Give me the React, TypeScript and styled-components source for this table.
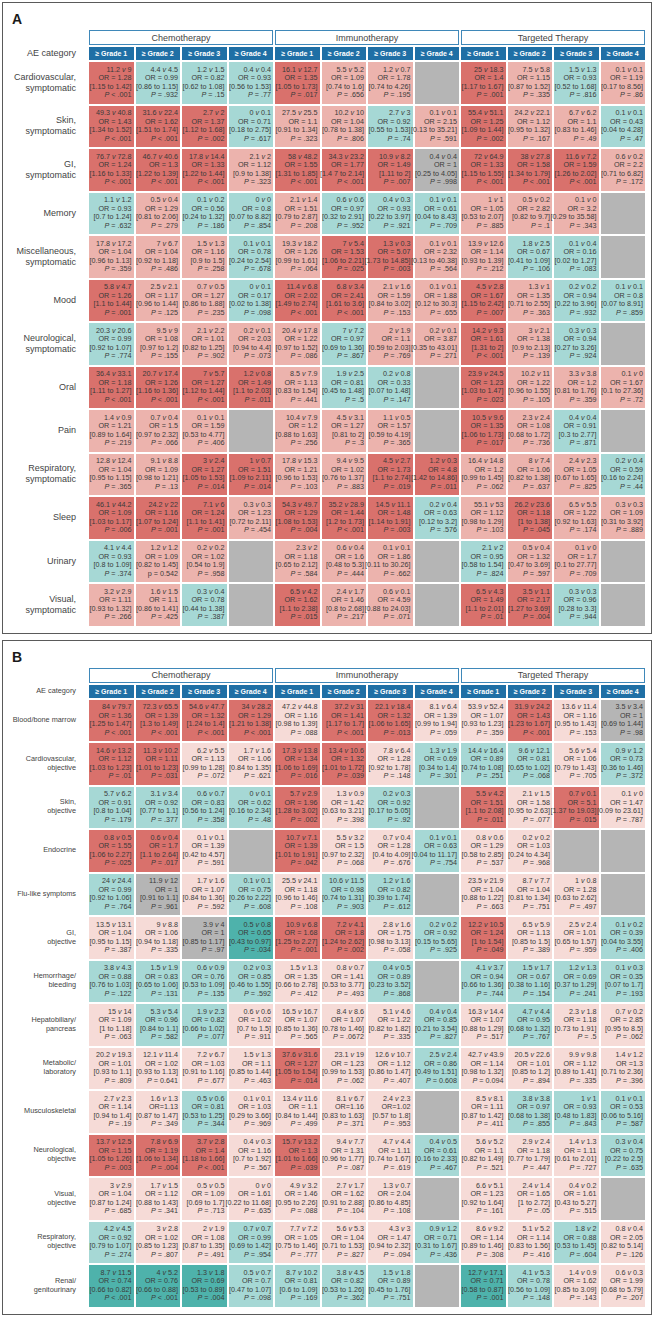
import React from 'react';
import styled, { createGlobalStyle } from 'styled-components';

// cell = "a v b;OR;ci;p"  (null = no data, grey block)
type RowData = { label: string[]; cells: (string | null)[] };

const GROUPS = ['Chemotherapy', 'Immunotherapy', 'Targeted Therapy'];
const GRADES = [1, 2, 3, 4];

const color = {
  red: '#d9716c',
  pinkA: '#ecb3ad',
  pinkB: '#f6dbd7',
  teal: '#a6d8d5',
  tealDark: '#4eb2ab',
  grey: '#b5b5b5',
  blue: '#1f6fa5',
  line: '#3f88b9',
  text: '#3a3a3a',
};

const panelA: RowData[] = [
  { label: ['Cardiovascular,', 'symptomatic'], cells: [
    '11.2 v 9;1.28;1.15 to 1.42;< .001', '4.4 v 4.5;0.99;0.86 to 1.15;= .932', '1.2 v 1.5;0.82;0.62 to 1.08;= .15', '0.4 v 0.4;0.93;0.56 to 1.53;= .77',
    '16.1 v 12.7;1.35;1.05 to 1.73;= .017', '5.5 v 5.2;1.09;0.74 to 1.6;= .656', '1.2 v 0.7;1.78;0.74 to 4.26;= .195', null,
    '25 v 18.3;1.4;1.17 to 1.67;= .001', '7.5 v 5.8;1.15;0.87 to 1.52;= .335', '1.5 v 1.3;0.93;0.52 to 1.68;= .816', '0.1 v 0.1;1.19;0.17 to 8.56;= .86',
  ] },
  { label: ['Skin,', 'symptomatic'], cells: [
    '49.3 v 40.8;1.43;1.34 to 1.52;< .001', '31.6 v 22.4;1.62;1.51 to 1.74;< .001', '2.7 v 2;1.37;1.12 to 1.68;= .002', '0 v 0.1;0.71;0.18 to 2.75;= .617',
    '27.5 v 25.5;1.1;0.91 to 1.34;= .323', '10.2 v 10;1.04;0.78 to 1.38;= .806', '2.7 v 3;0.92;0.55 to 1.53;= .74', '0.1 v 0.1;2.15;0.13 to 35.21;= .591',
    '55.4 v 51.1;1.25;1.09 to 1.44;= .002', '24.2 v 22.1;1.12;0.95 to 1.32;= .167', '6.7 v 6.2;1.1;0.83 to 1.46;= .49', '0.1 v 0.1;0.43;0.04 to 4.28;= .47',
  ] },
  { label: ['GI,', 'symptomatic'], cells: [
    '76.7 v 72.8;1.24;1.16 to 1.33;< .001', '46.7 v 40.6;1.3;1.22 to 1.39;< .001', '17.8 v 14.4;1.33;1.22 to 1.44;< .001', '2.1 v 2;1.12;0.9 to 1.38;= .323',
    '58 v 48.2;1.55;1.31 to 1.85;< .001', '34.3 v 23.2;1.77;1.4 7 to 2.14;< .001', '10.9 v 8.2;1.49;1.11 to 2;= .007', '0.4 v 0.4;1;0.25 to 4.05;= .998',
    '72 v 64.9;1.33;1.15 to 1.55;< .001', '38 v 27.8;1.58;1.34 to 1.79;< .001', '11.6 v 7.2;1.59;1.26 to 2.02;< .001', '0.6 v 0.2;2.2;0.71 to 6.82;= .172',
  ] },
  { label: ['Memory'], cells: [
    '1.1 v 1.2;0.93;0.7 to 1.24;= .632', '0.5 v 0.4;1.29;0.81 to 2.06;= .279', '0.1 v 0.2;0.56;0.24 to 1.32;= .186', '0 v 0;0.8;0.07 to 8.82;= .854',
    '2.1 v 1.4;1.51;0.79 to 2.87;= .208', '0.6 v 0.6;0.97;0.32 to 2.91;= .952', '0.4 v 0.3;0.93;0.22 to 3.97;= .921', '0.1 v 0.1;0.61;0.04 to 8.43;= .709',
    '1 v 1;1.05;0.53 to 2.07;= .885', '0.5 v 0.2;2.82;0.82 to 9.7;= .1', '0.1 v 0;3.2;0.29 to 35.58;= .343', null,
  ] },
  { label: ['Miscellaneous,', 'symptomatic'], cells: [
    '17.8 v 17.2;1.04;0.96 to 1.13;= .359', '7 v 6.7;1.04;0.92 to 1.18;= .486', '1.5 v 1.3;1.16;0.9 to 1.5;= .258', '0.1 v 0.1;0.78;0.24 to 2.54;= .678',
    '19.3 v 18.2;1.26;0.99 to 1.61;= .064', '7 v 5.4;1.53;1.06 to 2.21;= .025', '1.3 v 0.3;5.07;1.73 to 14.85;= .003', '0.1 v 0.1;2.32;0.13 to 40.38;= .564',
    '13.9 v 12.6;1.14;0.93 to 1.39;= .212', '1.8 v 2.5;0.67;0.41 to 1.09;= .106', '0.1 v 0.4;0.16;0.02 to 1.27;= .083', null,
  ] },
  { label: ['Mood'], cells: [
    '5.8 v 4.7;1.26;1.1 to 1.44;= .001', '2.5 v 2.1;1.17;0.96 to 1.44;= .125', '0.7 v 0.5;1.27;0.86 to 1.88;= .235', '0 v 0.1;0.17;0.02 to 1.38;= .098',
    '11.4 v 6.8;2.02;1.49 to 2.74;< .001', '6.8 v 3.4;2.41;1.61 to 3.6;< .001', '2.1 v 1.6;1.59;0.84 to 3.02;= .153', '0.1 v 0.1;1.88;0.12 to 30.3;= .655',
    '4.5 v 2.8;1.67;1.15 to 2.42;= .007', '1.3 v 1;1.35;0.71 to 2.55;= .363', '0.2 v 0.2;0.94;0.22 to 3.96;= .932', '0.1 v 0.1;0.8;0.07 to 8.91;= .859',
  ] },
  { label: ['Neurological,', 'symptomatic'], cells: [
    '20.3 v 20.6;0.99;0.92 to 1.07;= .774', '9.5 v 9;1.08;0.97 to 1.2;= .155', '2.1 v 2.2;1.01;0.82 to 1.25;= .902', '0.2 v 0.1;2.03;0.94 to 4.4;= .073',
    '20.4 v 17.8;1.22;0.97 to 1.52;= .086', '7 v 7.2;0.97;0.69 to 1.36;= .867', '2 v 1.9;1.1;0.59 to 2.03;= .769', '0.2 v 0.1;3.87;0.35 to 43.01;= .271',
    '14.2 v 9.3;1.61;1.31 to 2;< .001', '3 v 2.1;1.38;0.9 to 2.13;= .139', '0.3 v 0.3;0.94;0.27 to 3.26;= .924', null,
  ] },
  { label: ['Oral'], cells: [
    '36.4 v 33.1;1.18;1.11 to 1.27;< .001', '20.7 v 17.4;1.26;1.16 to 1.36;< .001', '7 v 5.7;1.27;1.12 to 1.44;< .001', '1.2 v 0.8;1.49;1.1 to 2.03;= .011',
    '8.5 v 7.9;1.13;0.83 to 1.54;= .441', '1.9 v 2.5;0.81;0.45 to 1.48;= .5', '0.2 v 0.8;0.33;0.07 to 1.48;= .147', null,
    '23.9 v 24.5;1.23;1.03 to 1.47;= .023', '10.2 v 11;1.22;0.96 to 1.55;= .105', '3.3 v 3.8;1.2;0.81 to 1.76;= .359', '0.1 v 0;1.67;0.1 to 27.36;= .72',
  ] },
  { label: ['Pain'], cells: [
    '1.4 v 0.9;1.21;0.89 to 1.64;= .219', '0.7 v 0.4;1.5;0.97 to 2.32;= .066', '0.1 v 0.1;1.59;0.53 to 4.77;= .406', null,
    '10.4 v 7.9;1.2;0.88 to 1.63;= .256', '4.5 v 3.1;1.27;0.81 to 2;= .3', '1.1 v 0.5;1.57;0.59 to 4.19;= .365', null,
    '10.5 v 9.6;1.35;1.06 to 1.73;= .017', '2.3 v 2.4;1.08;0.68 to 1.72;= .736', '0.4 v 0.4;0.91;0.3 to 2.77;= .871', null,
  ] },
  { label: ['Respiratory,', 'symptomatic'], cells: [
    '12.8 v 12.4;1.04;0.95 to 1.15;= .365', '9.1 v 8.8;1.09;0.98 to 1.21;= .13', '3 v 2.4;1.27;1.05 to 1.53;= .014', '1 v 0.7;1.51;1.09 to 2.11;= .014',
    '17.8 v 15.3;1.21;0.96 to 1.53;= .103', '9.4 v 9.5;1.02;0.76 to 1.37;= .883', '4.5 v 2.7;1.73;1.1 to 2.74;= .019', '1.2 v 0.3;4.8;1.42 to 14.86;= .011',
    '16.4 v 14.8;1.2;0.99 to 1.45;= .062', '8 v 7.4;1.06;0.82 to 1.38;= .637', '2.4 v 2.3;1.05;0.67 to 1.65;= .825', '0.2 v 0.4;0.59;0.16 to 2.24;= .44',
  ] },
  { label: ['Sleep'], cells: [
    '46.1 v 44.2;1.09;1.03 to 1.17;= .006', '24.2 v 22;1.16;1.07 to 1.24;= .001', '7.1 v 6;1.24;1.1 to 1.41;= .001', '0.3 v 0.3;1.23;0.72 to 2.11;= .454',
    '54.3 v 49.7;1.29;1.08 to 1.53;= .004', '35.2 v 28.9;1.44;1.2 to 1.73;< .001', '14.5 v 11.1;1.48;1.14 to 1.91;= .003', '0.2 v 0.4;0.63;0.12 to 3.2;= .576',
    '55.1 v 53;1.12;0.98 to 1.29;= .103', '26.2 v 23.6;1.18;1 to 1.38;= .045', '6.5 v 5.5;1.22;0.92 to 1.63;= .174', '0.3 v 0.3;1.09;0.31 to 3.92;= .889',
  ] },
  { label: ['Urinary'], cells: [
    '4.1 v 4.4;0.93;0.8 to 1.09;= .374', '1.2 v 1.2;1.09;0.82 to 1.45;p = 0.542', '0.2 v 0.2;1.02;0.54 to 1.9;= .958', null,
    '2.3 v 2;1.18;0.65 to 2.12;= .584', '0.6 v 0.4;1.6;0.48 to 5.3;= .444', '0.1 v 0.1;1.86;0.11 to 30.26;= .662', null,
    '2.1 v 2;0.95;0.58 to 1.54;= .824', '0.5 v 0.4;1.32;0.47 to 3.69;= .597', '0.1 v 0;1.7;0.1 to 27.77;= .709', null,
  ] },
  { label: ['Visual,', 'symptomatic'], cells: [
    '3.2 v 2.9;1.11;0.93 to 1.32;= .266', '1.6 v 1.5;1.1;0.86 to 1.41;= .425', '0.3 v 0.4;0.78;0.44 to 1.38;= .387', null,
    '6.5 v 4.2;1.62;1.1 to 2.38;= .015', '2.4 v 1.7;1.46;0.8 to 2.68;= .217', '0.6 v 0.1;4.59;0.88 to 24.03;= .071', null,
    '6.5 v 4.3;1.49;1.1 to 2.01;= .01', '3.5 v 1.1;2.17;1.27 to 3.69;= .004', '0.3 v 0.3;0.96;0.28 to 3.3;= .944', null,
  ] },
];

const panelB: RowData[] = [
  { label: ['Blood/bone marrow'], cells: [
    '84 v 79.7;1.36;1.25 to 1.47;< .001', '72.3 v 65.5;1.39;1.3 to 1.49;< .001', '54.6 v 47.7;1.32;1.24 to 1.4;< .001', '34 v 28.2;1.29;1.21 to 1.38;< .001',
    '47.2 v 44.8;1.16;0.98 to 1.39;= .088', '37.2 v 31;1.41;1.17 to 1.7;< .001', '22.1 v 18.4;1.32;1.06 to 1.65;= .013', '8.1 v 6.4;1.39;0.99 to 1.94;= .059',
    '53.9 v 52.4;1.07;0.93 to 1.23;= .359', '31.9 v 24.2;1.43;1.23 to 1.67;< .001', '13.6 v 11.4;1.16;0.95 to 1.43;= .153', '3.5 v 3.4;1;0.69 to 1.44;= .98',
  ] },
  { label: ['Cardiovascular,', 'objective'], cells: [
    '14.6 v 13.2;1.12;1.03 to 1.23;= .01', '11.3 v 10.2;1.11;1.01 to 1.23;= .031', '6.2 v 5.5;1.13;0.99 to 1.28;= .072', '1.7 v 1.6;1.06;0.84 to 1.35;= .621',
    '17.3 v 13.8;1.34;1.06 to 1.69;= .016', '13.4 v 10.6;1.32;1.01 to 1.72;= .039', '7.8 v 6.4;1.28;0.92 to 1.78;= .148', '1.3 v 1.9;0.69;0.34 to 1.4;= .301',
    '14.4 v 16.4;0.89;0.74 to 1.08;= .251', '9.6 v 12.1;0.81;0.65 to 1.02;= .068', '5.6 v 5.4;1.06;0.79 to 1.43;= .705', '0.9 v 1.2;0.73;0.36 to 1.46;= .372',
  ] },
  { label: ['Skin,', 'objective'], cells: [
    '5.7 v 6.2;0.91;0.8 to 1.04;= .179', '3.1 v 3.4;0.92;0.77 to 1.1;= .377', '0.6 v 0.7;0.83;0.56 to 1.24;= .358', '0 v 0.1;0.62;0.16 to 2.34;= .48',
    '5.7 v 2.9;1.96;1.28 to 3.02;= .002', '1.3 v 0.9;1.42;0.63 to 3.21;= .398', '0.2 v 0.3;0.92;0.17 to 5.05;= .92', null,
    '5.5 v 4.2;1.51;1.1 to 2.08;= .011', '2.1 v 1.5;1.58;0.95 to 2.63;= .077', '0.7 v 0.1;5.1;1.37 to 19.03;= .015', '0.1 v 0;1.47;0.09 to 23.61;= .787',
  ] },
  { label: ['Endocrine'], cells: [
    '0.8 v 0.5;1.55;1.06 to 2.27;= .025', '0.6 v 0.4;1.7;1.1 to 2.64;= .017', '0.1 v 0.1;1.39;0.42 to 4.57;= .591', null,
    '10.7 v 7.1;1.39;1.01 to 1.91;= .042', '5.5 v 3.2;1.5;0.97 to 2.32;= .068', '0.7 v 0.4;1.28;0.4 to 4.09;= .676', '0.1 v 0.1;0.63;0.04 to 11.17;= .754',
    '0.8 v 0.6;1.29;0.58 to 2.85;= .537', '0.2 v 0.2;1.03;0.24 to 4.34;= .968', null, null,
  ] },
  { label: ['Flu-like symptoms'], cells: [
    '24 v 24.4;0.99;0.92 to 1.06;= .764', '11.9 v 12;1;0.91 to 1.1;= .961', '1.7 v 1.6;1.07;0.84 to 1.36;= .592', '0.1 v 0.1;0.75;0.26 to 2.22;= .608',
    '25.5 v 24.1;1.18;0.96 to 1.46;= .108', '10.6 v 11.5;0.98;0.74 to 1.31;= .903', '1.2 v 1.6;0.82;0.39 to 1.74;= .612', null,
    '23.5 v 21.9;1.04;0.88 to 1.22;= .663', '8.7 v 7.7;1.04;0.81 to 1.34;= .751', '1 v 0.8;1.28;0.63 to 2.62;= .497', null,
  ] },
  { label: ['GI,', 'objective'], cells: [
    '13.5 v 13.1;1.04;0.95 to 1.15;= .387', '9 v 8.8;1.06;0.94 to 1.18;= .335', '3.9 v 4;1;0.85 to 1.17;= .97', '0.5 v 0.8;0.65;0.43 to 0.97;= .034',
    '10.9 v 6.8;1.68;1.25 to 2.27;= .001', '7.2 v 4.1;1.8;1.24 to 2.62;= .002', '2.8 v 1.6;1.75;0.98 to 3.13;= .058', '0.2 v 0.2;0.92;0.15 to 5.65;= .925',
    '12.2 v 10.5;1.24;1 to 1.54;= .049', '6.5 v 5.9;1.13;0.85 to 1.5;= .389', '2.5 v 2.4;1.01;0.65 to 1.57;= .959', '0.1 v 0.2;0.39;0.04 to 3.55;= .406',
  ] },
  { label: ['Hemorrhage/', 'bleeding'], cells: [
    '3.8 v 4.3;0.88;0.76 to 1.03;= .122', '1.5 v 1.9;0.83;0.65 to 1.06;= .131', '0.6 v 0.9;0.76;0.53 to 1.09;= .135', '0.2 v 0.3;0.85;0.46 to 1.55;= .592',
    '1.5 v 1.3;1.35;0.66 to 2.78;= .412', '0.8 v 0.7;1.41;0.53 to 3.77;= .493', '0.4 v 0.5;0.89;0.23 to 3.52;= .868', null,
    '4.1 v 3.7;0.94;0.66 to 1.36;= .744', '1.5 v 1.7;0.67;0.38 to 1.16;= .154', '1.2 v 1.3;0.69;0.37 to 1.29;= .241', '0.1 v 0.3;0.35;0.07 to 1.7;= .193',
  ] },
  { label: ['Hepatobiliary/', 'pancreas'], cells: [
    '15 v 14;1.09;1 to 1.18;= .063', '5.3 v 5.4;0.96;0.84 to 1.1;= .582', '1.9 v 2.3;0.82;0.66 to 1.02;= .077', '0.6 v 0.6;1.02;0.7 to 1.5;= .911',
    '16.5 v 16.7;1.07;0.85 to 1.36;= .565', '8.4 v 8.6;1.07;0.78 to 1.46;= .0672', '5.1 v 4.6;1.22;0.82 to 1.82;= .335', '0.4 v 0.4;0.85;0.21 to 3.54;= .827',
    '16.3 v 14.4;1.07;0.88 to 1.29;= .517', '4.7 v 4.4;0.95;0.68 to 1.32;= .767', '2.3 v 1.8;1.18;0.73 to 1.91;= .5', '0.7 v 0.2;2.85;0.95 to 8.5;= .062',
  ] },
  { label: ['Metabolic/', 'laboratory'], cells: [
    '20.2 v 19.3;1.01;0.93 to 1.1;= .809', '12.1 v 11.4;1.02;0.93 to 1.13;= 0.641', '7.2 v 6.7;1.03;0.91 to 1.16;= .677', '1.5 v 1.3;1.1;0.85 to 1.44;= .463',
    '37.6 v 31.6;1.27;1.05 to 1.54;= .014', '23.1 v 19;1.23;0.99 to 1.53;= .062', '12.6 v 10.7;1.12;0.86 to 1.47;= .407', '2.5 v 2.4;0.86;0.49 to 1.51;= 0.608',
    '42.7 v 43.9;1.14;0.98 to 1.32;= 0.094', '20.5 v 22.6;1.01;0.85 to 1.2;= .894', '9.9 v 9.8;1.12;0.89 to 1.41;= .335', '1.4 v 1.2;OR =1.3;0.71 to 2.36;= .396',
  ] },
  { label: ['Musculoskeletal'], cells: [
    '2.7 v 2.3;1.14;0.94 to 1.4;= .19', '1.6 v 1.3;OR=1.13;0.87 to 1.47;= .349', '0.5 v 0.6;0.81;0.53 to 1.25;= .344', '0.1 v 0.1;1.03;0.29 to 3.66;= .969',
    '13.4 v 11.6;1.1;0.84 to 1.44;= .499', '8.1 v 6.7;OR=1.16;0.83 to 1.63;= .371', '2.4 v 2.3;OR=1.02;0.57 to 1.8;= .953', null,
    '8.5 v 8.1;1.11;0.87 to 1.42;= .411', '3.8 v 3.8;0.97;0.68 to 1.38;= .855', '1 v 1;0.93;0.48 to 1.83;= .843', '0.1 v 0.1;0.53;0.06 to 5.16;= .587',
  ] },
  { label: ['Neurological,', 'objective'], cells: [
    '13.7 v 12.5;1.15;1.05 to 1.26;= .003', '7.8 v 6.9;1.19;1.06 to 1.34;= .004', '3.7 v 2.8;1.4;1.18 to 1.66;< .001', '0.4 v 0.3;1.16;0.7 to 1.92;= .567',
    '15.7 v 13.2;1.3;1.01 to 1.66;= .039', '9.4 v 7.7;1.31;0.96 to 1.77;= .087', '4.7 v 4.4;1.11;0.74 to 1.67;= .619', '0.4 v 0.5;0.61;0.16 to 2.33;= .467',
    '5.6 v 5.2;1.1;0.82 to 1.49;= .521', '2.9 v 2.4;1.18;0.77 to 1.79;= .447', '1.4 v 1.3;1.11;0.61 to 2.01;= .727', '0.3 v 0.4;0.75;0.22 to 2.5;= .635',
  ] },
  { label: ['Visual,', 'objective'], cells: [
    '3 v 2.9;1.04;0.87 to 1.24;= .685', '1.7 v 1.5;1.12;0.88 to 1.43;= .341', '0.5 v 0.5;1.09;0.69 to 1.7;= .713', '0 v 0;1.61;0.22 to 11.68;= .635',
    '4.9 v 3.2;1.46;0.95 to 2.26;= .088', '2.7 v 1.7;1.62;0.91 to 2.88;= .104', '1.3 v 0.7;2.04;0.86 to 4.85;= .108', null,
    '6.6 v 5.1;1.23;0.92 to 1.64;= .161', '2.4 v 1.4;1.65;1 to 2.72;= .05', '0.4 v 0.2;1.61;0.43 to 5.27;= .515', null,
  ] },
  { label: ['Respiratory,', 'objective'], cells: [
    '4.2 v 4.5;0.92;0.79 to 1.07;= .274', '3 v 2.8;1.02;0.85 to 1.23;= .807', '2 v 1.9;1.08;0.87 to 1.35;= .491', '0.7 v 0.7;0.99;0.69 to 1.42;= .954',
    '7.7 v 7.2;1.05;0.75 to 1.46;= .777', '5.6 v 5.3;1.04;0.71 to 1.53;= .827', '4.3 v 3;1.47;0.94 to 2.32;= .094', '0.9 v 1.2;0.71;0.31 to 1.67;= .436',
    '8.6 v 9.2;1.14;0.89 to 1.46;= .308', '5.1 v 5.2;1.14;0.83 to 1.56;= .416', '1.8 v 2;0.88;0.53 to 1.45;= .604', '0.8 v 0.4;2.05;0.82 to 5.14;= .126',
  ] },
  { label: ['Renal/', 'genitourinary'], cells: [
    '8.7 v 11.5;0.74;0.66 to 0.82;< .001', '4 v 5.2;0.76;0.66 to 0.88;< .001', '1.3 v 1.8;0.69;0.53 to 0.89;= .004', '0.5 v 0.7;0.7;0.47 to 1.07;= .098',
    '8.7 v 10.2;0.81;0.6 to 1.09;= .169', '3.8 v 4.5;0.82;0.53 to 1.26;= .362', '1.5 v 1.8;0.89;0.45 to 1.76;= .751', null,
    '12.7 v 17.1;0.71;0.58 to 0.87;= .001', '4.1 v 5.3;0.78;0.56 to 1.09;= .148', '1.4 v 0.9;1.62;0.85 to 3.09;= .143', '0.6 v 0.3;1.99;0.68 to 5.79;= .207',
  ] },
];

const shade = (cell: string | null, pink: string) => {
  if (!cell) return color.grey;
  const [, or, , p] = cell.split(';');
  const orValue = parseFloat(or.replace(/[^0-9.]/g, ''));
  const pValue = p.includes('<') ? 0.0001 : parseFloat(p.replace(/[^0-9.]/g, ''));
  if (orValue === 1) return color.grey;
  if (orValue > 1) return pValue < 0.05 ? color.red : pink;
  return pValue < 0.05 ? color.tealDark : color.teal;
};

const ResultCell: React.FC<{ cell: string | null; pink: string }> = ({ cell, pink }) => {
  if (!cell) return <CellBox $bg={color.grey} />;
  const [rates, or, ci, p] = cell.split(';');
  const [treated, control] = rates.split(' v ');
  const pText = p.startsWith('p') ? p : `P ${p}`;
  return (
    <CellBox $bg={shade(cell, pink)}>
      <Line>
        {treated} <i>v</i> {control}
      </Line>
      <Line>{or.startsWith('OR') ? or : `OR = ${or}`}</Line>
      <Line>[{ci}]</Line>
      <Line>{pText.startsWith('P') ? <><i>P</i>{pText.slice(1)}</> : pText}</Line>
    </CellBox>
  );
};

const Panel: React.FC<{ letter: string; rows: RowData[]; labelSize: number; pink: string }> = ({
  letter,
  rows,
  labelSize,
  pink,
}) => (
  <PanelBox>
    <Letter>{letter}</Letter>
    <Table>
      <span />
      {GROUPS.map((g) => (
        <GroupHead key={g}>{g}</GroupHead>
      ))}
      <RowLabel $size={labelSize}>AE category</RowLabel>
      {GROUPS.flatMap((g) =>
        GRADES.map((n) => <GradeHead key={g + n}>≥ Grade {n}</GradeHead>),
      )}
      {rows.map((row) => (
        <React.Fragment key={row.label.join(' ')}>
          <RowLabel $size={labelSize}>
            <span>
              {row.label.map((l, i) => (
                <React.Fragment key={l}>
                  {i > 0 && <br />}
                  {l}
                </React.Fragment>
              ))}
            </span>
          </RowLabel>
          {row.cells.map((c, i) => (
            <ResultCell key={i} cell={c} pink={pink} />
          ))}
        </React.Fragment>
      ))}
    </Table>
  </PanelBox>
);

export default function App() {
  return (
    <>
      <GlobalStyle />
      <Page>
        <Panel letter="A" rows={panelA} labelSize={9} pink={color.pinkA} />
        <Panel letter="B" rows={panelB} labelSize={7.3} pink={color.pinkB} />
      </Page>
    </>
  );
}

const GlobalStyle = createGlobalStyle`
  body {
    margin: 0;
    background: #fff;
    font-family: 'Liberation Sans', Arial, sans-serif;
  }
`;

const Page = styled.div`
  width: 655px;
  padding: 2px 2px 0 2px;
  box-sizing: border-box;
  display: flex;
  flex-direction: column;
  gap: 6px;
`;

const PanelBox = styled.section`
  width: 650px;
  box-sizing: border-box;
  border: 1px solid #5a5a5a;
  padding: 7px 6px 7px 8px;
`;

const Letter = styled.div`
  height: 18px;
  line-height: 18px;
  font-size: 14px;
  font-weight: bold;
  color: #1a1a1a;
  padding-left: 1px;
  margin-bottom: 2px;
`;

const Table = styled.div`
  display: grid;
  grid-template-columns: 76px repeat(12, 44.5px);
  gap: 2px;
`;

const GroupHead = styled.div`
  grid-column: span 4;
  height: 15px;
  box-sizing: border-box;
  border: 1px solid ${color.line};
  background: #fff;
  display: flex;
  align-items: center;
  justify-content: center;
  font-size: 9px;
  color: #444;
`;

const GradeHead = styled.div`
  height: 13px;
  background: ${color.blue};
  color: #fff;
  font-size: 7px;
  font-weight: bold;
  display: flex;
  align-items: center;
  justify-content: center;
  white-space: nowrap;
`;

const RowLabel = styled.div<{ $size: number }>`
  display: flex;
  align-items: center;
  justify-content: flex-end;
  text-align: right;
  padding-right: 11px;
  font-size: ${(p) => p.$size}px;
  line-height: ${(p) => p.$size * 1.22}px;
  color: #444;
  white-space: nowrap;
`;

const CellBox = styled.div<{ $bg: string }>`
  height: 41.5px;
  box-sizing: border-box;
  padding-right: 2px;
  background: ${(p) => p.$bg};
  display: flex;
  flex-direction: column;
  justify-content: center;
  align-items: flex-end;
  font-size: 7.2px;
  line-height: 8.4px;
  color: ${color.text};
  white-space: nowrap;
`;

const Line = styled.span`
  display: block;
`;
